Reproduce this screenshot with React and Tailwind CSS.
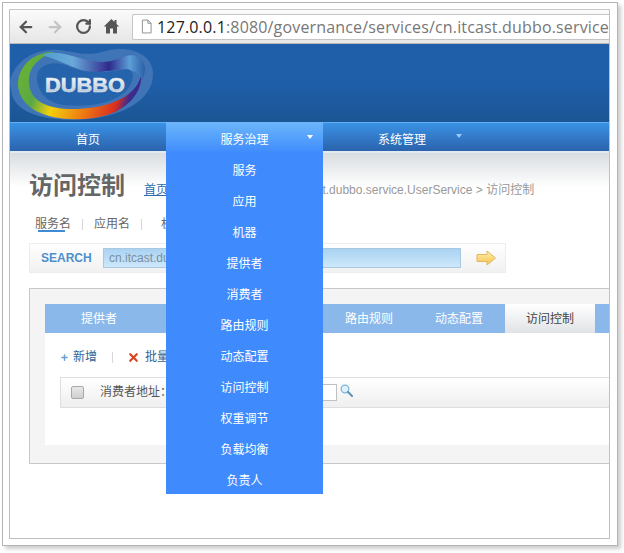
import React from "react";
import { ArrowLeft, ArrowRight, RotateCw, Plus, X } from "lucide-react";

const CN = { fontFamily: '"Liberation Sans","Noto Sans CJK SC",sans-serif' };
const menu = ["服务", "应用", "机器", "提供者", "消费者", "路由规则", "动态配置", "访问控制", "权重调节", "负载均衡", "负责人"];

function Logo() {
  return (
    <svg width="146" height="80" viewBox="0 0 146 80" className="shrink-0">
      <defs>
        <linearGradient id="ring" x1="0" y1="0" x2="1" y2="0.2">
          <stop offset="0" stopColor="#6fb52e" />
          <stop offset="0.25" stopColor="#5aa845" />
          <stop offset="0.42" stopColor="#f1d00c" />
          <stop offset="0.68" stopColor="#ef7b12" />
          <stop offset="0.92" stopColor="#d92d1f" />
          <stop offset="1" stopColor="#3d2a8f" />
        </linearGradient>
        <linearGradient id="top" x1="0" y1="0" x2="1" y2="0">
          <stop offset="0" stopColor="#4f9fce" />
          <stop offset="0.3" stopColor="#69a9da" />
          <stop offset="0.65" stopColor="#2f2a8c" />
          <stop offset="0.85" stopColor="#5c9fd6" />
          <stop offset="1" stopColor="#2b5fa8" />
        </linearGradient>
        <linearGradient id="txt" x1="0" y1="0" x2="0" y2="1">
          <stop offset="0" stopColor="#ffffff" />
          <stop offset="1" stopColor="#aebdd0" />
        </linearGradient>
      </defs>
      <path d="M0 38C2 18 24 3 48 5C68 7 76 12 96 6C118 0 142 8 143 28C144 50 122 66 92 72C60 78 10 76 2 50Z" fill="#3f74b6" />
      <path d="M8 40C8 18 28 6 44 7C26 14 18 24 19 38C20 54 34 63 58 64C88 65 126 56 131 30C133 46 118 68 84 73C46 78 10 68 8 40Z" fill="url(#ring)" />
      <path d="M32 10C50 3 66 15 90 17C108 18 118 6 128 12C136 17 137 24 132 36C128 22 112 24 90 27C72 29 58 18 32 10Z" fill="url(#top)" />
      <path d="M27 32C27 20 44 14 60 22C76 29 96 28 116 24C126 24 124 38 116 46C102 60 74 62 54 60C38 58 27 48 27 32Z" fill="#2563ac" />
      <text x="35" y="47" fontFamily="Liberation Sans" fontSize="20" fontWeight="700" fill="url(#txt)" stroke="#dfe7f0" strokeWidth="0.5" textLength="80" lengthAdjust="spacingAndGlyphs">DUBBO</text>
    </svg>
  );
}

function HomeIcon() {
  return (
    <svg width="17" height="17" viewBox="0 0 17 17" fill="#555">
      <path d="M8.5 1L0.8 8.6H3V15.5H7V10.5H10V15.5H14V8.6H16.2L13.5 6V2H11.5V4Z" />
    </svg>
  );
}

function FileIcon() {
  return (
    <svg width="12" height="15" viewBox="0 0 12 15" fill="none" stroke="#8a8a8a" strokeWidth="1">
      <path d="M1.5 .5H7.5L11 4V14.5H1.5ZM7.5 .5V4H11" />
    </svg>
  );
}

function GoArrow() {
  return (
    <svg width="20" height="16" viewBox="0 0 20 16">
      <defs>
        <linearGradient id="go" x1="0" y1="0" x2="0" y2="1">
          <stop offset="0" stopColor="#fff3b0" />
          <stop offset="1" stopColor="#f6c04a" />
        </linearGradient>
      </defs>
      <path d="M1 4.5H11V1L19.5 8L11 15V11.5H1Z" fill="url(#go)" stroke="#e3b463" />
    </svg>
  );
}

function Magnifier() {
  return (
    <svg width="13" height="13" viewBox="0 0 13 13" className="ml-[3px] mb-[3px]">
      <circle cx="5" cy="5" r="3.8" fill="#dff0fb" stroke="#7fb6dc" strokeWidth="1.3" />
      <path d="M8 8L12 12" stroke="#5f8fb3" strokeWidth="2" strokeLinecap="round" />
    </svg>
  );
}

function Divider() {
  return <span className="w-px h-[11px] bg-[#d5d5d5]" />;
}

export default function App() {
  return (
    <div className="relative w-[624px] h-[553px] bg-white overflow-hidden" style={CN}>
      <div className="ml-[2px] mt-[2px] w-[616px] h-[544px] border border-[#b4b4b4] bg-white pt-[6px] pl-[6px] shadow-[3px_3px_4px_rgba(0,0,0,0.2)]">
        <div className="relative w-[601px] h-[530px] border border-[#c0c0c0] border-t-[#c8c8c8] overflow-hidden bg-white">
          {/* browser toolbar */}
          <div className="h-[34px] flex items-center bg-gradient-to-b from-[#fbfbfb] to-[#e6e6e6] border-b border-[#b9b9b9]">
            <div className="w-[122px] pl-[7px] flex items-center gap-[11px] shrink-0">
              <ArrowLeft size={18} strokeWidth={3} color="#555" />
              <ArrowRight size={18} strokeWidth={3} color="#c4c4c4" />
              <RotateCw size={17} strokeWidth={3.2} color="#555" />
              <HomeIcon />
            </div>
            <div className="flex-1 h-[26px] flex items-center bg-white border border-[#c4c4c4] border-r-0 rounded-l-[2px] pl-[8px] overflow-hidden">
              <FileIcon />
              <span className="ml-[5px] text-[16px] whitespace-nowrap text-[#777]" style={{ fontFamily: '"Open Sans",sans-serif', letterSpacing: "0.16px" }}>
                <span className="text-[#222]">127.0.0.1</span>:8080/governance/services/cn.itcast.dubbo.service
              </span>
            </div>
          </div>

          {/* header */}
          <div className="h-[78px] bg-gradient-to-b from-[#1f5fa9] via-[#1f5fa9] to-[#1b5594] pt-[1px]">
            <Logo />
          </div>

          {/* nav */}
          <div className="flex h-[31px] text-[12px] text-white">
            <div className="w-[156px] flex items-center justify-center pt-[5px] border-t border-[#5fb0f5] border-b-2 border-b-[#dfeaf3] bg-gradient-to-b from-[#3b92e6] to-[#2b63ac]">首页</div>
            <div className="w-[157px] relative flex items-center justify-center pt-[5px] bg-gradient-to-b from-[#6cb6fb] to-[#3f8bfd]">
              服务治理
              <span className="absolute right-[10px] top-[13px] w-0 h-0 border-x-[3px] border-x-transparent border-t-[4px] border-t-white" />
            </div>
            <div className="flex-1 relative flex items-center pt-[6px] border-t border-[#5fb0f5] border-b-2 border-b-[#dfeaf3] bg-gradient-to-b from-[#3b92e6] to-[#2b63ac] pl-[55px]">
              系统管理
              <span className="ml-[30px] mb-[8px] w-0 h-0 border-x-[3px] border-x-transparent border-t-[4px] border-t-[#9cc9f2]" />
            </div>
          </div>

          {/* page */}
          <div className="h-[385px] bg-gradient-to-b from-[#d9dde0] to-white to-[34px] px-[19px]">
            <div className="h-[61px] flex items-center pt-[5px] whitespace-nowrap overflow-hidden">
              <span className="text-[24px] font-bold text-[#666] w-[115px]">访问控制</span>
              <a className="mt-[8px] text-[12px] text-[#2b6cae] underline">首页</a>
              <span className="mt-[8px] ml-[4px] text-[12px] text-[#999]">&gt; 服务治理 &gt; 服务 &gt; cn.itcast.dubbo.service.UserService &gt; 访问控制</span>
            </div>

            <div className="h-[20px] flex items-center pl-[6px] gap-[11px] text-[12px] text-[#666] relative">
              <span>服务名</span>
              <Divider />
              <span>应用名</span>
              <Divider />
              <span className="ml-[8px]">机器IP</span>
              <span className="absolute left-[9px] top-[16px] w-[27px] h-[2px] bg-[#3f8bd6]" />
            </div>

            <div className="mt-[9px] w-[477px] h-[30px] flex items-center bg-gradient-to-b from-white to-[#f1f1f1] border border-[#ededed]">
              <span className="ml-[11px] w-[62px] text-[12px] font-bold text-[#4d8fcf]">SEARCH</span>
              <div className="w-[358px] h-[20px] flex items-center pl-[5px] border border-[#a9c8e2] bg-gradient-to-b from-[#a9d3f2] to-[#cde8fb] text-[12px] text-[#7b8f9f]">cn.itcast.dubbo.service.UserService</div>
              <span className="ml-[15px]"><GoArrow /></span>
            </div>

            {/* panel */}
            <div className="mt-[15px] w-[600px] h-[176px] border border-[#c8c8c8] border-r-0 bg-[#f4f4f4] pt-[15px] pl-[15px]">
              <div className="h-[29px] flex items-center bg-[#8ab8ea] text-[12px] text-white">
                <span className="w-[108px] text-center">提供者</span>
                <span className="w-[86px] text-center">消费者</span>
                <span className="w-[85px] text-center">应用</span>
                <span className="w-[90px] text-center">路由规则</span>
                <span className="w-[90px] text-center">动态配置</span>
                <span className="ml-[1px] w-[90px] h-full flex items-center justify-center bg-gradient-to-b from-white to-[#e0e3e6] text-[#444]">访问控制</span>
              </div>
              <div className="h-[112px] bg-white pl-[15px]">
                <div className="h-[44px] flex items-center pt-[4px] text-[12px] text-[#2f6596]">
                  <Plus size={9} strokeWidth={4} color="#6aa0d0" />
                  <span className="ml-[4px]">新增</span>
                  <span className="ml-[15px] w-px h-[11px] bg-[#d8d8d8]" />
                  <X size={13} strokeWidth={4} color="#d8431f" className="ml-[14px]" />
                  <span className="ml-[5px]">批量删除</span>
                </div>
                <div className="h-[31px] flex items-center pb-[1px] border border-[#dedede] border-r-0 bg-gradient-to-b from-white to-[#efefef] text-[12px] text-[#555]">
                  <span className="ml-[10px] w-[13px] h-[13px] rounded-[2px] border border-[#a8a8a8] bg-gradient-to-b from-[#e8e8e8] to-[#cfcfcf]" />
                  <span className="ml-[16px] w-[150px]">消费者地址：</span>
                  <span className="ml-[27px] w-[60px] h-[17px] border border-[#c0c0c0] bg-white" />
                  <Magnifier />
                </div>
              </div>
            </div>
          </div>

          {/* dropdown */}
          <div className="absolute left-[156px] top-[142px] w-[157px] h-[342px] pt-[3px] bg-[#3f8bfd] flex flex-col text-[12px] text-white overflow-hidden">
            {menu.map((m) => (
              <div key={m} className="h-[31px] shrink-0 flex items-center justify-center">{m}</div>
            ))}
          </div>
        </div>
      </div>
    </div>
  );
}
